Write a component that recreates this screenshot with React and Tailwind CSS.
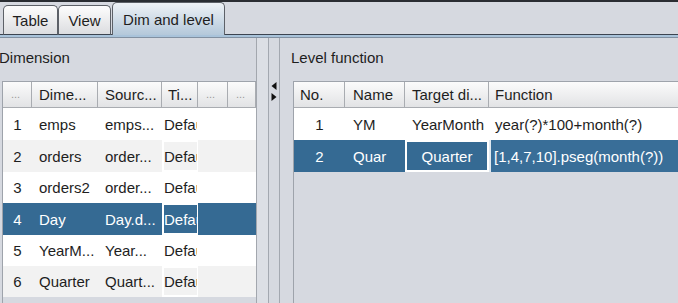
import React from "react";

const dimRows = [
  { no: 1, name: "emps", source: "emps...", time: "Default" },
  { no: 2, name: "orders", source: "order...", time: "Default" },
  { no: 3, name: "orders2", source: "order...", time: "Default" },
  { no: 4, name: "Day", source: "Day.d...", time: "Default", selected: true },
  { no: 5, name: "YearM...", source: "Year...", time: "Default" },
  { no: 6, name: "Quarter", source: "Quart...", time: "Default" },
];

const rowHeights = ["h-[32px]", "h-[32px]", "h-[31px]", "h-[32px]", "h-[31px]", "h-[31px]"];

const HeaderCell = ({ w, children, dots, pad = "pl-[7px]" }) => (
  <div
    className={`${w} shrink-0 h-full flex items-center ${pad} border-r border-[#a9acb1] bg-gradient-to-b from-[#fbfbfb] to-[#e2e3e5] overflow-hidden whitespace-nowrap`}
  >
    {dots ? <span className="text-[11px] text-[#9a9a9a] pl-[1px]">...</span> : children}
  </div>
);

function DimensionTable() {
  return (
    <div className="ml-[2px] flex-1 border-l border-t border-[#9ea3ab] flex flex-col overflow-hidden">
      <div className="h-[26px] flex border-b border-[#a9acb1]">
        <HeaderCell w="w-[29px]" dots />
        <HeaderCell w="w-[66px]">Dime...</HeaderCell>
        <HeaderCell w="w-[64px]">Sourc...</HeaderCell>
        <HeaderCell w="w-[36px]" pad="pl-[6px]">Ti...</HeaderCell>
        <HeaderCell w="w-[30px]" dots />
        <HeaderCell w="w-[28px]" dots />
      </div>
      {dimRows.map((r, i) => {
        const bg = r.selected ? "bg-[#356a93] text-white" : i % 2 === 1 ? "bg-[#f2f2f2]" : "bg-white";
        return (
          <div key={r.no} className={`${rowHeights[i]} flex ${bg}`}>
            <div className="w-[29px] shrink-0 flex items-center justify-center">{r.no}</div>
            <div className="w-[66px] shrink-0 flex items-center pl-[7px] overflow-hidden whitespace-nowrap">
              {r.name}
            </div>
            <div className="w-[64px] shrink-0 flex items-center pl-[7px] overflow-hidden whitespace-nowrap">
              {r.source}
            </div>
            <div className="w-[36px] shrink-0 flex items-center border-y-2 border-l-[2px] border-r-[1px] border-white overflow-hidden whitespace-nowrap">
              {r.time}
            </div>
            <div className="w-[30px] shrink-0" />
            <div className="w-[28px] shrink-0" />
          </div>
        );
      })}
    </div>
  );
}

function LevelTable() {
  return (
    <div className="ml-[13px] flex-1 border-l border-t border-[#9ea3ab] flex flex-col overflow-hidden">
      <div className="h-[26px] flex border-b border-[#a9acb1]">
        <HeaderCell w="w-[51px]" pad="pl-[6px]">No.</HeaderCell>
        <HeaderCell w="w-[60px]" pad="pl-[8px]">Name</HeaderCell>
        <HeaderCell w="w-[84px]">Target di...</HeaderCell>
        <div className="flex-1 h-full flex items-center pl-[6px] bg-gradient-to-b from-[#fbfbfb] to-[#e2e3e5]">
          Function
        </div>
      </div>
      <div className="h-[32px] flex bg-white">
        <div className="w-[51px] shrink-0 flex items-center justify-center">1</div>
        <div className="w-[60px] shrink-0 flex items-center pl-[8px]">YM</div>
        <div className="w-[84px] shrink-0 flex items-center pl-[7px] whitespace-nowrap">YearMonth</div>
        <div className="flex-1 flex items-center pl-[6px] whitespace-nowrap">year(?)*100+month(?)</div>
      </div>
      <div className="h-[32px] flex bg-[#356a93] text-white">
        <div className="w-[51px] shrink-0 flex items-center justify-center">2</div>
        <div className="w-[60px] shrink-0 flex items-center pl-[8px]">Quar</div>
        <div className="w-[84px] shrink-0 flex items-center justify-center border-2 border-white">Quarter</div>
        <div className="flex-1 flex items-center pl-[3px] border-l-2 border-[#dfe8f0] bg-[#396e98] whitespace-nowrap">
          [1,4,7,10].pseg(month(?))
        </div>
      </div>
    </div>
  );
}

function Tab({ label, w, selected }) {
  return (
    <div
      className={`${w} shrink-0 flex items-center justify-center rounded-t-[5px] border border-[#5d6168] ${
        selected
          ? "h-[33px] border-b-0 bg-gradient-to-b from-[#eef2f6] to-[#b4c8da]"
          : "h-[30px] border-b-[#3c4450] bg-gradient-to-b from-[#fdfdfd] to-[#dcdde0]"
      }`}
    >
      {label}
    </div>
  );
}

export default function App() {
  return (
    <div className="w-[678px] h-[303px] overflow-hidden bg-[#d6d9e0] text-[15px] leading-none text-[#1e1e1e] font-['Liberation_Sans',Arial,sans-serif] flex flex-col">
      <div className="h-[2px] bg-[#2a2d32]" />
      <div className="h-[33px] flex items-end">
        <div className="w-[3px] h-full border-b border-[#3c4450]" />
        <Tab label="Table" w="w-[55px]" />
        <Tab label="View" w="w-[53px]" />
        <div className="w-px h-full border-b border-[#3c4450]" />
        <Tab label="Dim and level" w="w-[113px]" selected />
        <div className="flex-1 h-full border-b border-[#3c4450]" />
      </div>
      <div className="h-[2px] bg-[#a9c3da]" />
      <div className="h-px bg-[#8190a1]" />
      <div className="flex-1 flex min-h-0">
        <div className="w-[257px] shrink-0 border-r border-[#a3a7ae] flex flex-col">
          <div className="h-[43px] pt-[12px] -ml-[1px] shrink-0">Dimension</div>
          <DimensionTable />
        </div>
        <div className="w-[23px] shrink-0 flex">
          <div className="w-[11px] bg-[#dcdfe5]" />
          <div className="w-px bg-[#a3a8b0]" />
          <div className="w-[10px] flex flex-col items-center pt-[44px] gap-[3px]">
            <svg className="block" width="6" height="8" viewBox="0 0 6 8">
              <path d="M5.5 0 L0.5 4 L5.5 8 Z" fill="#111" />
            </svg>
            <svg className="block" width="6" height="8" viewBox="0 0 6 8">
              <path d="M0.5 0 L5.5 4 L0.5 8 Z" fill="#111" />
            </svg>
          </div>
          <div className="w-px bg-[#a3a8b0]" />
        </div>
        <div className="flex-1 flex flex-col min-w-0">
          <div className="h-[43px] pt-[12px] pl-[11px] shrink-0">Level function</div>
          <LevelTable />
        </div>
      </div>
    </div>
  );
}
